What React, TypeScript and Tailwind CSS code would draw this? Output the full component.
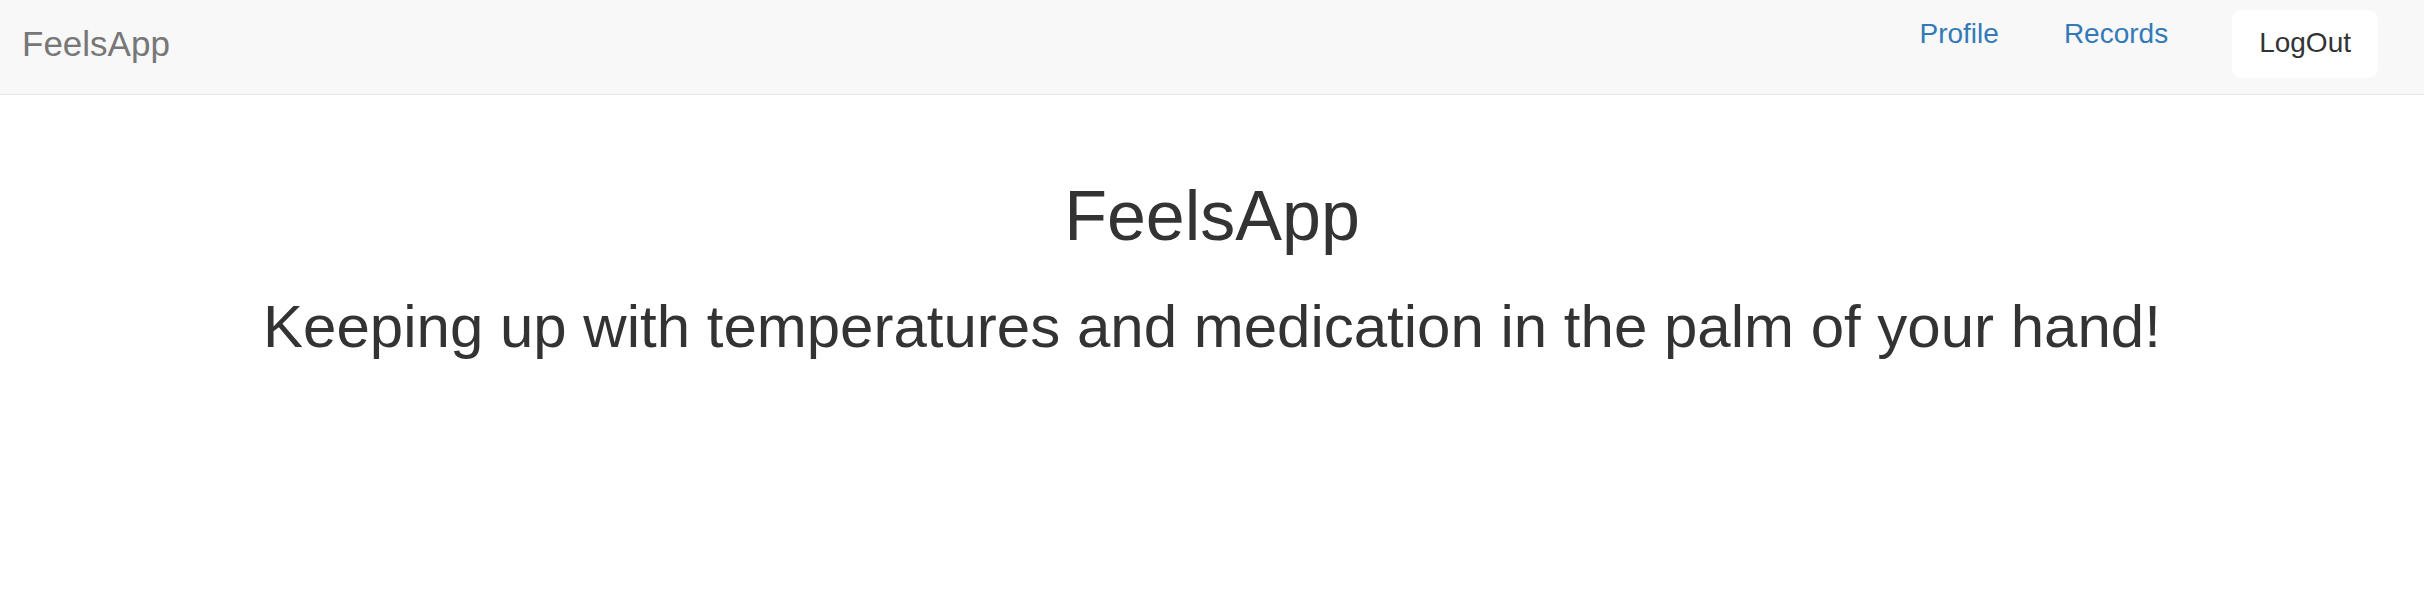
import React from 'react';

const font = { fontFamily: '"Liberation Sans", Arial, Helvetica, sans-serif' };

const NavBar = () => (
  <nav className="flex h-[95px] items-start justify-between border-b border-[#e7e7e7] bg-[#f8f8f8]">
    <a className="ml-[22px] pt-[26px] text-[35px] leading-[35px] text-[#777]">FeelsApp</a>
    <div className="flex items-start pr-[46px]">
      <a className="pt-[20px] text-[28px] leading-[28px] text-[#337ab7]">Profile</a>
      <a className="ml-[65px] pt-[20px] text-[28px] leading-[28px] text-[#337ab7]">Records</a>
      <button className="ml-[64px] mt-[10px] h-[68px] rounded-[10px] bg-white px-[27px] pt-[19px] pb-[21px] text-[28px] leading-[28px] text-[#333]">
        LogOut
      </button>
    </div>
  </nav>
);

export default function App() {
  return (
    <div className="min-h-[614px] bg-white" style={font}>
      <NavBar />
      <main className="flex flex-col items-center text-[#333]">
        <h1 className="mt-[86px] text-[70px] leading-[70px]">FeelsApp</h1>
        <h2 className="mt-[46px] text-[60px] leading-[60px]">
          Keeping up with temperatures and medication in the palm of your hand!
        </h2>
      </main>
    </div>
  );
}
